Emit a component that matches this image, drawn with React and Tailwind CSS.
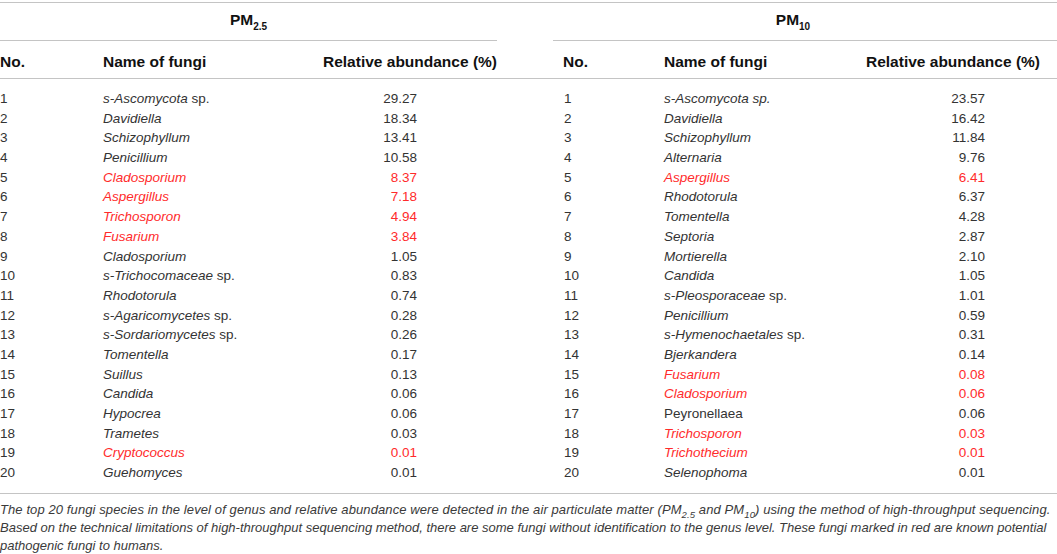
const pm25 = [
  ["1", "s-Ascomycota", "29.27", false, " sp."],
  ["2", "Davidiella", "18.34"],
  ["3", "Schizophyllum", "13.41"],
  ["4", "Penicillium", "10.58"],
  ["5", "Cladosporium", "8.37", true],
  ["6", "Aspergillus", "7.18", true],
  ["7", "Trichosporon", "4.94", true],
  ["8", "Fusarium", "3.84", true],
  ["9", "Cladosporium", "1.05"],
  ["10", "s-Trichocomaceae", "0.83", false, " sp."],
  ["11", "Rhodotorula", "0.74"],
  ["12", "s-Agaricomycetes", "0.28", false, " sp."],
  ["13", "s-Sordariomycetes", "0.26", false, " sp."],
  ["14", "Tomentella", "0.17"],
  ["15", "Suillus", "0.13"],
  ["16", "Candida", "0.06"],
  ["17", "Hypocrea", "0.06"],
  ["18", "Trametes", "0.03"],
  ["19", "Cryptococcus", "0.01", true],
  ["20", "Guehomyces", "0.01"],
];

const pm10 = [
  ["1", "s-Ascomycota sp.", "23.57"],
  ["2", "Davidiella", "16.42"],
  ["3", "Schizophyllum", "11.84"],
  ["4", "Alternaria", "9.76"],
  ["5", "Aspergillus", "6.41", true],
  ["6", "Rhodotorula", "6.37"],
  ["7", "Tomentella", "4.28"],
  ["8", "Septoria", "2.87"],
  ["9", "Mortierella", "2.10"],
  ["10", "Candida", "1.05"],
  ["11", "s-Pleosporaceae", "1.01", false, " sp."],
  ["12", "Penicillium", "0.59"],
  ["13", "s-Hymenochaetales", "0.31", false, " sp."],
  ["14", "Bjerkandera", "0.14"],
  ["15", "Fusarium", "0.08", true],
  ["16", "Cladosporium", "0.06", true],
  ["17", "Peyronellaea", "0.06", false, "", true],
  ["18", "Trichosporon", "0.03", true],
  ["19", "Trichothecium", "0.01", true],
  ["20", "Selenophoma", "0.01"],
];

function Name({ row }) {
  const [, name, , , suffix, upright] = row;
  return (
    <span>
      <span className={upright ? "" : "italic"}>{name}</span>
      {suffix}
    </span>
  );
}

export default function App() {
  return (
    <div className="w-[1057px] h-[554px] bg-white pt-[2px] font-['Liberation_Sans',Arial,sans-serif] text-[#333]">
      <div className="border-t-[1.5px] border-[#c4c4c4]">
        {/* group headers */}
        <div className="flex h-[38px] text-[15.5px] font-bold text-[#111]">
          <div className="w-[497px] flex items-center justify-center pb-[3px] border-b-[1.5px] border-[#c4c4c4]">
            <span>
              PM<sub className="text-[10px] align-[-2px]">2.5</sub>
            </span>
          </div>
          <div className="ml-[56px] flex-1 flex items-center justify-center pb-[3px] pr-[24px] border-b-[1.5px] border-[#c4c4c4]">
            <span>
              PM<sub className="text-[10px] align-[-2px]">10</sub>
            </span>
          </div>
        </div>

        {/* column headers */}
        <div className="grid grid-cols-[103px_220px_240px_101px_202px_191px] h-[38px] pt-[4px] items-center text-[15.5px] font-bold text-[#111] border-b-[1.5px] border-[#c4c4c4]">
          <div>No.</div>
          <div>Name of fungi</div>
          <div>Relative abundance (%)</div>
          <div>No.</div>
          <div>Name of fungi</div>
          <div>Relative abundance (%)</div>
        </div>

        {/* body */}
        <div className="pt-[10px] pb-[10px] border-b-[1.5px] border-[#c4c4c4] text-[13.5px]">
          {pm25.map((l, i) => {
            const r = pm10[i];
            const lc = l[3] ? "text-[#ff2b2b]" : "";
            const rc = r[3] ? "text-[#ff2b2b]" : "";
            return (
              <div key={l[0]} className="grid grid-cols-[103px_220px_240px_101px_202px_191px] h-[19.7px] items-center">
                <div>{l[0]}</div>
                <div className={lc}>
                  <Name row={l} />
                </div>
                <div className={lc}>
                  <div className="w-[94px] text-right">{l[2]}</div>
                </div>
                <div className="pl-[1px]">{r[0]}</div>
                <div className={rc}>
                  <Name row={r} />
                </div>
                <div className={rc}>
                  <div className="w-[119px] text-right">{r[2]}</div>
                </div>
              </div>
            );
          })}
        </div>

        {/* caption */}
        <p className="pt-[7px] text-[13px] leading-[18px] italic text-[#3a3a3a] whitespace-nowrap">
          <span className="tracking-[0.1px]">
            The top 20 fungi species in the level of genus and relative abundance were detected in the air particulate matter (PM
            <sub className="text-[9.5px] align-[-2px]">2.5</sub> and PM<sub className="text-[9.5px] align-[-2px]">10</sub>) using
            the method of high-throughput sequencing.
          </span>
          <br />
          Based on the technical limitations of high-throughput sequencing method, there are some fungi without identification to
          the genus level. These fungi marked in red are known potential
          <br />
          pathogenic fungi to humans.
        </p>
      </div>
    </div>
  );
}
